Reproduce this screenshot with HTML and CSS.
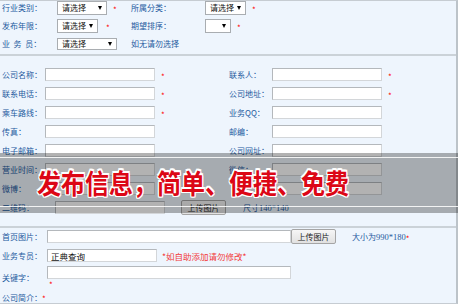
FILE: index.html
```html
<!DOCTYPE html>
<html lang="zh-CN">
<head>
    <meta charset="UTF-8">
    <title>发布信息</title>
    <link rel="stylesheet" href="styles.css">
</head>
<body>
    <div class="page">
        <div class="sec sec-top">
            <div class="row">
                <div class="top-left">
                    <span class="lbl lbl-top">行业类别：</span>
                    <span class="sel sel-50">请选择</span>
                    <span class="star">*</span>
                </div>
                <span class="lbl lbl-top2">所属分类：</span>
                <span class="sel sel-41">请选择</span>
                <span class="star">*</span>
            </div>
            <div class="row">
                <div class="top-left">
                    <span class="lbl lbl-top">发布年限：</span>
                    <span class="sel sel-41">请选择</span>
                    <span class="star star-wide">*</span>
                </div>
                <span class="lbl lbl-top2">期望排序：</span>
                <span class="sel sel-26"></span>
                <span class="star">*</span>
            </div>
            <div class="row">
                <div class="top-left">
                    <span class="lbl lbl-top">业&nbsp;&nbsp;务&nbsp;&nbsp;员：</span>
                    <span class="sel sel-60 sel-low">请选择</span>
                </div>
                <span class="lbl">如无请勿选择</span>
            </div>
        </div>

        <div class="sec sec-main">
            <div class="row">
                <div class="half"><span class="lbl lbl-m">公司名称：</span><input class="inp" type="text"><span class="star">*</span></div>
                <div class="half"><span class="lbl lbl-m">联系人：</span><input class="inp" type="text"><span class="star">*</span></div>
            </div>
            <div class="row">
                <div class="half"><span class="lbl lbl-m">联系电话：</span><input class="inp" type="text"><span class="star">*</span></div>
                <div class="half"><span class="lbl lbl-m">公司地址：</span><input class="inp" type="text"><span class="star">*</span></div>
            </div>
            <div class="row">
                <div class="half"><span class="lbl lbl-m">乘车路线：</span><input class="inp" type="text"><span class="star">*</span></div>
                <div class="half"><span class="lbl lbl-m">业务QQ：</span><input class="inp" type="text"></div>
            </div>
            <div class="row">
                <div class="half"><span class="lbl lbl-m">传真：</span><input class="inp" type="text"></div>
                <div class="half"><span class="lbl lbl-m">邮编：</span><input class="inp" type="text"></div>
            </div>
            <div class="row">
                <div class="half"><span class="lbl lbl-m">电子邮箱：</span><input class="inp" type="text"></div>
                <div class="half"><span class="lbl lbl-m">公司网址：</span><input class="inp" type="text"></div>
            </div>
            <div class="row">
                <div class="half"><span class="lbl lbl-m">营业时间：</span><input class="inp" type="text"></div>
                <div class="half"><span class="lbl lbl-m">微信：</span><input class="inp" type="text"></div>
            </div>
            <div class="row">
                <div class="half"><span class="lbl lbl-m">微博：</span><input class="inp" type="text"></div>
                <div class="half"><span class="lbl lbl-m"></span><input class="inp" type="text"></div>
            </div>
            <div class="row">
                <span class="lbl lbl-qr">二维码：</span><input class="inp" type="text">
                <button class="btn btn-qr" type="button">上传图片</button>
                <span class="lbl note">尺寸<span class="num">140*140</span></span>
            </div>
        </div>

        <div class="sec sec-bottom">
            <div class="row row-pic">
                <span class="lbl lbl-b">首页图片：</span><input class="inp inp-wide" type="text">
                <button class="btn" type="button">上传图片</button>
                <span class="lbl note">大小为<span class="num">990*180</span></span><span class="star">*</span>
            </div>
            <div class="row row-staff">
                <span class="lbl lbl-b">业务专员：</span><input class="inp" type="text" value="正典查询">
                <span class="warn">*如自助添加请勿修改*</span>
            </div>
            <div class="row row-key">
                <span class="lbl lbl-b">关键字：</span>
                <div class="key-col">
                    <input class="inp inp-wide" type="text">
                    <span class="star star-below">*</span>
                </div>
            </div>
            <div class="row row-intro">
                <span class="lbl">公司简介：</span><span class="star">*</span>
            </div>
        </div>
    </div>

    <div class="banner">
        <div class="banner-inner">
            <span class="slogan">发布信息，简单、便捷、免费</span>
        </div>
    </div>
</body>
</html>
```

FILE: styles.css
```css
body {
    margin: 0;
    position: relative;
    font-family: "Noto Sans CJK SC", sans-serif;
    background: #eef5fd;
}

.page {
    width: 456px;
    height: 302px;
    background: #eef5fd;
    border-top: 1px solid #c6ccd2;
    border-right: 2px solid #bcc3c9;
    border-bottom: 1px solid #c6ccd2;
    overflow: hidden;
}

.sec {
    padding-left: 2px;
    display: flex;
    flex-direction: column;
}

.sec-top {
    padding-bottom: 3px;
    gap: 4px;
    border-bottom: 2px solid #cbd2d8;
}

.sec-main {
    padding-top: 12px;
    padding-bottom: 12px;
    gap: 6px;
    border-bottom: 2px solid #cbd2d8;
}

.sec-bottom {
    padding-top: 1px;
}

.row {
    display: flex;
    align-items: center;
    height: 14px;
}

.sec-main .row {
    height: 13px;
}

.lbl {
    font-size: 8px;
    line-height: 10px;
    color: #245a9e;
    white-space: nowrap;
}

.top-left {
    display: flex;
    align-items: center;
    width: 129px;
}

.lbl-top {
    width: 55px;
}

.lbl-top2 {
    width: 74px;
}

.sel {
    position: relative;
    box-sizing: border-box;
    height: 14px;
    padding-left: 4px;
    background: #fff;
    border: 1px solid #a9adb1;
    font-size: 8px;
    line-height: 12px;
    color: #111;
}

.sel::after {
    content: "";
    position: absolute;
    right: 4px;
    top: 4px;
    border-left: 2.5px solid transparent;
    border-right: 2.5px solid transparent;
    border-top: 4px solid #000;
}

.sel-low {
    height: 12px;
    line-height: 10px;
}

.sel-low::after {
    top: 3px;
}

.sel-50 { width: 50px; }
.sel-41 { width: 41px; }
.sel-60 { width: 60px; }
.sel-26 { width: 26px; }

.star {
    margin-left: 6px;
    margin-top: 4px;
    font-size: 8px;
    line-height: 8px;
    color: #f00;
}

.star-wide {
    margin-left: 8px;
}

.half {
    display: flex;
    align-items: center;
    width: 231px;
}

.lbl-m {
    width: 43px;
}

.lbl-qr {
    width: 53px;
}

.lbl-b {
    width: 45px;
}

.inp {
    box-sizing: border-box;
    width: 110px;
    height: 13px;
    margin: 0;
    padding: 0 3px;
    background: #fff;
    border: 1px solid;
    border-color: #b4b8bc #d3d6d9 #d3d6d9 #b4b8bc;
    font-family: "Noto Sans CJK SC", sans-serif;
    font-size: 8.5px;
    color: #111;
}

.inp-wide {
    width: 244px;
}

.btn {
    box-sizing: border-box;
    width: 45px;
    height: 15px;
    margin: 0;
    padding: 0;
    background: linear-gradient(#f6f6f6, #e1e1e1);
    border: 1px solid #a5a5a5;
    border-radius: 2px;
    font-family: "Noto Sans CJK SC", sans-serif;
    font-size: 8px;
    line-height: 12px;
    color: #222;
}

.btn-qr {
    margin-left: 16px;
}

.note {
    margin-left: 17px;
}

.row-pic .note {
    margin-left: 16px;
}

.row-pic .star {
    margin-left: 0;
}

.num {
    font-family: "Liberation Serif", serif;
    font-size: 8.5px;
}

.row-pic {
    height: 15px;
}

.row-staff {
    margin-top: 5px;
    height: 13px;
}

.warn {
    margin-left: 5px;
    font-size: 8.5px;
    line-height: 10px;
    color: #f23a3a;
    white-space: nowrap;
}

.row-key {
    margin-top: 4px;
    height: 23px;
}

.key-col {
    display: flex;
    flex-direction: column;
    align-self: flex-start;
}

.star-below {
    margin-left: 2px;
    margin-top: 2px;
}

.row-intro {
    margin-top: 5px;
    height: 9px;
    align-items: flex-end;
}

.row-intro .star {
    margin-left: 0;
    margin-top: 0;
}

.banner {
    position: absolute;
    top: 153px;
    left: 0;
    right: 0;
    height: 60px;
    padding: 4px 0 6px;
    box-sizing: border-box;
    background: rgba(0, 0, 0, 0.3);
}

.banner-inner {
    display: flex;
    align-items: center;
    height: 100%;
    padding-left: 37px;
    border-top: 1px solid rgba(255, 255, 255, 0.85);
    border-bottom: 1px solid rgba(255, 255, 255, 0.85);
    box-sizing: border-box;
}

.slogan {
    display: inline-block;
    font-size: 24px;
    font-weight: 700;
    line-height: 26px;
    color: #dc0716;
    transform: scaleY(1.15);
    text-shadow: 1px 0 0 #fff, -1px 0 0 #fff, 0 1px 0 #fff, 0 -1px 0 #fff,
        1px 1px 0 #fff, -1px -1px 0 #fff, 1px -1px 0 #fff, -1px 1px 0 #fff;
    white-space: nowrap;
}
```
